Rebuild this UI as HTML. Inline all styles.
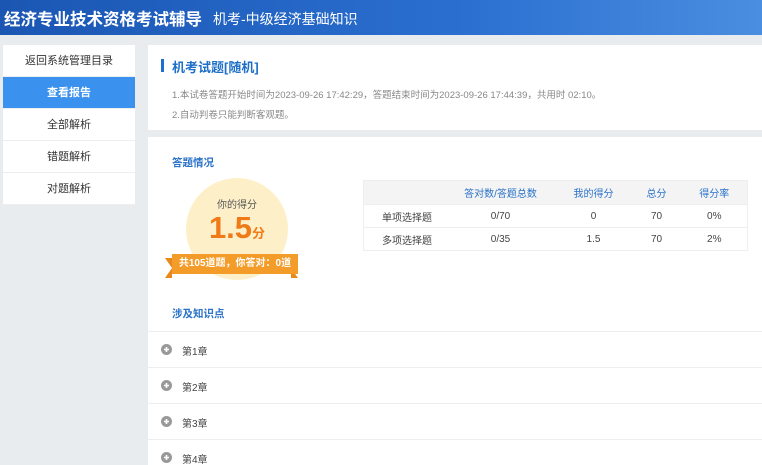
<!DOCTYPE html>
<html><head><meta charset="utf-8"><style>
*{margin:0;padding:0;box-sizing:border-box}
html,body{width:762px;height:465px;overflow:hidden}
body{background:#e9ecef;font-family:"Liberation Sans","Noto Sans CJK SC",sans-serif;position:relative}
.hd{position:absolute;left:0;top:0;width:762px;height:35px;background:linear-gradient(90deg,#1b56b3,#2a6fd0 60%,#4a8ee0);color:#fff}
.hd .t{position:absolute;left:4px;top:6px;font-size:16.5px;font-weight:bold;white-space:nowrap}
.hd .s{position:absolute;left:213px;top:9px;font-size:14px;white-space:nowrap}
.side{position:absolute;left:3px;top:45px;width:132px;background:#fff}
.side div{height:32px;line-height:32px;text-align:center;font-size:11px;color:#333;border-bottom:1px solid #eee}
.side .on{background:#3a91ee;color:#fff;font-weight:bold}
.p1{position:absolute;left:148px;top:45px;width:614px;height:85px;background:#fff}
.p1 .bar{position:absolute;left:13px;top:14px;width:3px;height:13px;background:#1e6fd0}
.p1 .ti{position:absolute;left:24px;top:12px;font-size:13px;font-weight:bold;color:#1e6fc8}
.p1 .l{position:absolute;left:24px;font-size:9.5px;color:#888;white-space:nowrap}
.p2{position:absolute;left:148px;top:137px;width:614px;height:328px;background:#fff}
.h2{position:absolute;left:24px;font-size:10.5px;font-weight:bold;color:#2a72c8}
.circ{position:absolute;left:38px;top:41px;width:102px;height:102px;border-radius:50%;background:#fdf0c8}
.circ .a{position:absolute;top:18px;width:100%;text-align:center;font-size:10px;color:#555}
.circ .b{position:absolute;top:32px;width:100%;text-align:center;font-size:31px;font-weight:bold;color:#f07a18}
.circ .b span{font-size:13px}
.rib{position:absolute;left:24px;top:117px;width:126px;height:20px;background:#f39c2a;color:#fff;font-size:10px;font-weight:bold;line-height:20px;text-align:center}
.rl,.rr{position:absolute;top:121px;width:0;height:0;border-top:10px solid #e8891c;border-bottom:10px solid #e8891c}
.rl{left:17px;border-left:7px solid transparent}
.rr{left:143px;border-right:7px solid transparent}
table{position:absolute;left:215px;top:43px;width:384px;border-collapse:collapse;font-size:10px;color:#444;table-layout:fixed;border:1px solid #eee}
td{height:23px;border-bottom:1px solid #eee;text-align:center}
tr.h td{background:#f4f4f4;color:#2a72c8;height:24px}
td:first-child{text-align:left;padding-left:18px}
.row{position:absolute;left:0;width:614px;height:36px;border-top:1px solid #eee;font-size:10px;color:#444}
.row svg{position:absolute;left:13px;top:12px}
.row span{position:absolute;left:34px;top:11px}
</style></head><body>
<div class="hd"><div class="t">经济专业技术资格考试辅导</div><div class="s">机考-中级经济基础知识</div></div>
<div class="side"><div>返回系统管理目录</div><div class="on">查看报告</div><div>全部解析</div><div>错题解析</div><div>对题解析</div></div>
<div class="p1"><div class="bar"></div><div class="ti">机考试题[随机]</div>
<div class="l" style="top:42px">1.本试卷答题开始时间为2023-09-26 17:42:29，答题结束时间为2023-09-26 17:44:39，共用时 02:10。</div>
<div class="l" style="top:62px">2.自动判卷只能判断客观题。</div></div>
<div class="p2">
<div class="h2" style="top:18px">答题情况</div>
<div class="circ"><div class="a">你的得分</div><div class="b">1.5<span>分</span></div></div>
<div class="rl"></div><div class="rr"></div>
<div class="rib">共105道题，你答对：0道</div>
<table><colgroup><col style="width:82px"><col style="width:110px"><col style="width:76px"><col style="width:50px"><col style="width:66px"></colgroup>
<tr class="h"><td></td><td>答对数/答题总数</td><td>我的得分</td><td>总分</td><td>得分率</td></tr>
<tr><td>单项选择题</td><td>0/70</td><td>0</td><td>70</td><td>0%</td></tr>
<tr><td>多项选择题</td><td>0/35</td><td>1.5</td><td>70</td><td>2%</td></tr></table>
<div class="h2" style="top:169px">涉及知识点</div>
<div class="row" style="top:194px"><svg width="11" height="11"><circle cx="5.5" cy="5.5" r="5.5" fill="#999"/><path d="M3 5.5h5M5.5 3v5" stroke="#fff" stroke-width="1.6"/></svg><span>第1章</span></div>
<div class="row" style="top:230px"><svg width="11" height="11"><circle cx="5.5" cy="5.5" r="5.5" fill="#999"/><path d="M3 5.5h5M5.5 3v5" stroke="#fff" stroke-width="1.6"/></svg><span>第2章</span></div>
<div class="row" style="top:266px"><svg width="11" height="11"><circle cx="5.5" cy="5.5" r="5.5" fill="#999"/><path d="M3 5.5h5M5.5 3v5" stroke="#fff" stroke-width="1.6"/></svg><span>第3章</span></div>
<div class="row" style="top:302px"><svg width="11" height="11"><circle cx="5.5" cy="5.5" r="5.5" fill="#999"/><path d="M3 5.5h5M5.5 3v5" stroke="#fff" stroke-width="1.6"/></svg><span>第4章</span></div>
</div>
</body></html>
